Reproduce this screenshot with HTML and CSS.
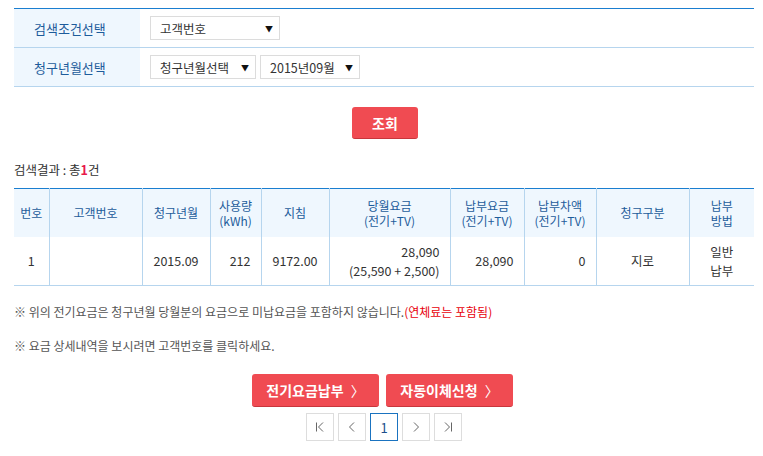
FILE: index.html
```html
<html>
	<head>
		<meta charset="utf-8"/>
		<title>전기요금 조회</title>
		<link rel="stylesheet" href="styles.css">
	</head>
	<body>
		<div class="wrap">
			<table class="search">
				<tr>
					<th>검색조건선택</th>
					<td>
						<div class="select w130"><span>고객번호</span><i>▼</i></div>
					</td>
				</tr>
				<tr>
					<th>청구년월선택</th>
					<td>
						<div class="selects">
							<div class="select w106"><span>청구년월선택</span><i>▼</i></div>
							<div class="select w100"><span>2015년09월</span><i>▼</i></div>
						</div>
					</td>
				</tr>
			</table>

			<div class="search_btn">
				<button class="btn btn_small">조회</button>
			</div>

			<p class="result">검색결과 : 총<b>1</b>건</p>

			<table class="list">
				<colgroup>
					<col style="width:35px">
					<col style="width:93px">
					<col style="width:68px">
					<col style="width:51px">
					<col style="width:68px">
					<col style="width:121px">
					<col style="width:74px">
					<col style="width:72px">
					<col style="width:93px">
					<col style="width:65px">
				</colgroup>
				<tr>
					<th>번호</th>
					<th>고객번호</th>
					<th>청구년월</th>
					<th>사용량<br/>(kWh)</th>
					<th>지침</th>
					<th>당월요금<br/>(전기+TV)</th>
					<th>납부요금<br/>(전기+TV)</th>
					<th>납부차액<br/>(전기+TV)</th>
					<th>청구구분</th>
					<th>납부<br/>방법</th>
				</tr>
				<tr>
					<td>1</td>
					<td></td>
					<td>2015.09</td>
					<td class="right">212</td>
					<td>9172.00</td>
					<td class="right">28,090<br/>(25,590 + 2,500)</td>
					<td class="right">28,090</td>
					<td class="right">0</td>
					<td>지로</td>
					<td>일반<br/>납부</td>
				</tr>
			</table>

			<p class="note">※ 위의 전기요금은 청구년월 당월분의 요금으로 미납요금을 포함하지 않습니다.<em>(연체료는 포함됨)</em></p>
			<p class="note">※ 요금 상세내역을 보시려면 고객번호를 클릭하세요.</p>

			<div class="actions">
				<button class="btn btn_big">전기요금납부 <span class="arrow">〉</span></button>
				<button class="btn btn_big">자동이체신청 <span class="arrow">〉</span></button>
			</div>

			<div class="paging">
				<a href="" class="page">
					<svg width="12" height="12" viewBox="0 0 12 12"><path d="M2.5 1.5v9M9 1.5L4.5 6L9 10.5" fill="none" stroke="#666" stroke-width="1"/></svg>
				</a>
				<a href="" class="page">
					<svg width="12" height="12" viewBox="0 0 12 12"><path d="M8 1.5L3.5 6L8 10.5" fill="none" stroke="#666" stroke-width="1"/></svg>
				</a>
				<a href="" class="page current">1</a>
				<a href="" class="page">
					<svg width="12" height="12" viewBox="0 0 12 12"><path d="M4 1.5L8.5 6L4 10.5" fill="none" stroke="#666" stroke-width="1"/></svg>
				</a>
				<a href="" class="page">
					<svg width="12" height="12" viewBox="0 0 12 12"><path d="M3 1.5L7.5 6L3 10.5M9.5 1.5v9" fill="none" stroke="#666" stroke-width="1"/></svg>
				</a>
			</div>
		</div>
	</body>
</html>
```

FILE: styles.css
```css
body {
	margin: 0;
	font-family: "Noto Sans CJK KR", "Noto Sans", sans-serif;
	font-size: 12px;
	color: #333;
}
.wrap {
	width: 740px;
	padding: 8px 0 0 14px;
}
table {
	border-collapse: collapse;
	width: 100%;
}

/* search conditions */
.search {
	border-top: 1px solid #1a7ed0;
}
.search tr {
	border-bottom: 1px solid #b6d5ee;
}
.search th {
	width: 106px;
	height: 39px;
	padding: 0 0 0 20px;
	background: #eff7fe;
	color: #1d5c9b;
	font-weight: normal;
	font-size: 13px;
	text-align: left;
}
.search td {
	padding: 0 10px;
}
.selects {
	display: flex;
	gap: 4px;
}
.select {
	display: flex;
	align-items: center;
	justify-content: space-between;
	box-sizing: border-box;
	height: 24px;
	padding: 0 6px 0 9px;
	border: 1px solid #dcdcdc;
	background: #fff;
	font-size: 12.5px;
	color: #333;
}
.select i {
	font-style: normal;
	font-size: 8px;
	color: #111;
}
.w130 { width: 130px; }
.w106 { width: 106px; }
.w100 { width: 100px; }

/* buttons */
.btn {
	border: none;
	border-bottom: 1px solid #c8363c;
	border-radius: 3px;
	background: #f04b52;
	color: #fff;
	font-family: inherit;
	font-weight: bold;
	cursor: pointer;
}
.search_btn {
	display: flex;
	justify-content: center;
	margin-top: 20px;
	padding-left: 2px;
}
.btn_small {
	width: 66px;
	height: 32px;
	font-size: 14px;
}

.result {
	margin: 22px 0 9px 0;
	line-height: 18px;
	font-size: 12.5px;
}
.result b {
	color: #e8194b;
}

/* list */
.list {
	table-layout: fixed;
	border-top: 1px solid #1a7ed0;
	border-bottom: 1px solid #b6d5ee;
}
.list th, .list td {
	border-left: 1px solid #b6d5ee;
	text-align: center;
	padding: 0;
}
.list th:first-child, .list td:first-child {
	border-left: none;
}
.list th {
	height: 48px;
	background: #eff7fe;
	color: #1d5c9b;
	font-weight: normal;
	font-size: 12px;
	line-height: 15px;
}
.list td {
	height: 49px;
	font-size: 12.5px;
	line-height: 19px;
}
.list td.right {
	text-align: right;
	padding-right: 10px;
}

/* notes */
.note {
	margin: 17px 0 0 0;
	line-height: 18px;
	color: #555;
}
.note + .note {
	margin-top: 16px;
}
.note em {
	font-style: normal;
	color: #e8000a;
}

.actions {
	display: flex;
	justify-content: center;
	gap: 7px;
	margin-top: 19px;
	padding-right: 3px;
}
.btn_big {
	width: 127px;
	height: 33px;
	font-size: 14px;
}
.arrow {
	font-weight: normal;
	margin-left: 4px;
}

/* paging */
.paging {
	display: flex;
	justify-content: center;
	gap: 4px;
	margin-top: 6px;
}
.page {
	display: flex;
	align-items: center;
	justify-content: center;
	box-sizing: border-box;
	width: 28px;
	height: 28px;
	border: 1px solid #dddddd;
	color: #666;
	text-decoration: none;
}
.page.current {
	border-color: #1a73c0;
	color: #1d4f8b;
	font-size: 13px;
}
```
